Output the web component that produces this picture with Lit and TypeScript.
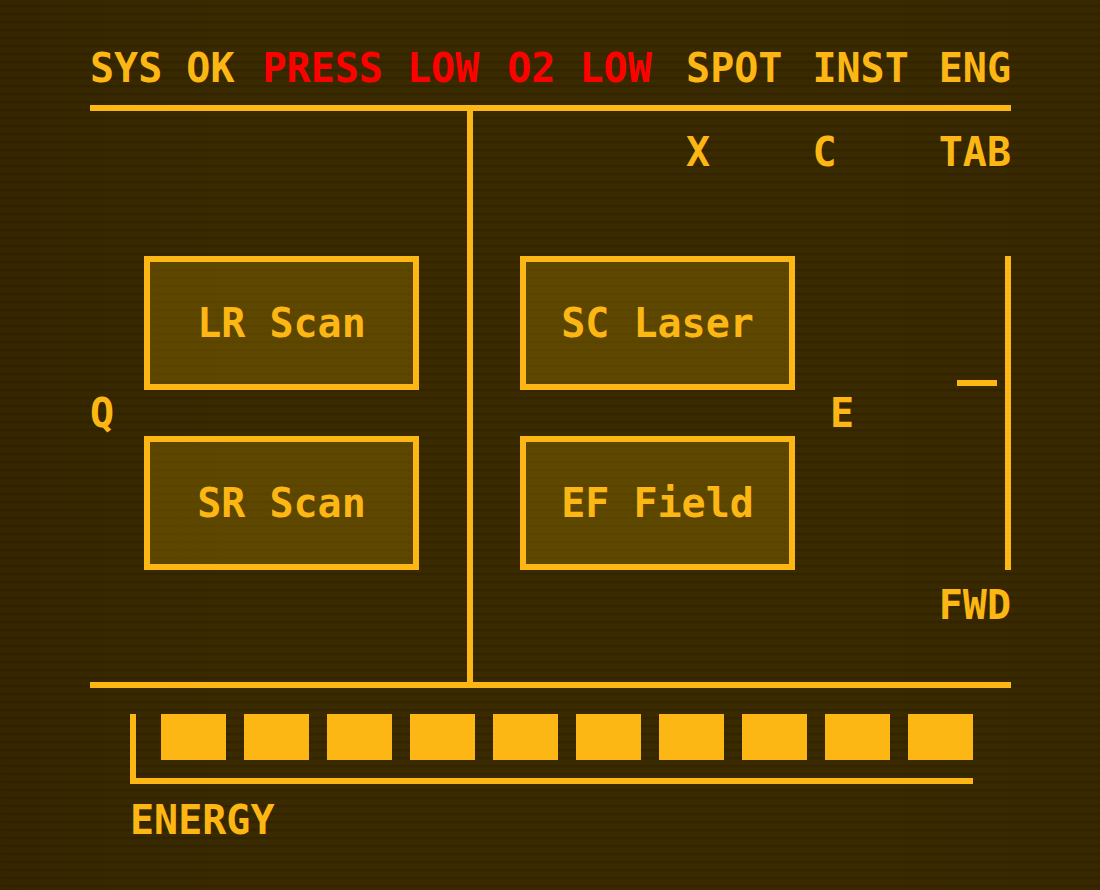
import { LitElement, html, css } from "lit";
import { customElement, property, state } from "lit/decorators.js";

@customElement("system-button")
class SystemButton extends LitElement {
  @property() label = "";

  static styles = css`
    :host { display: block; }
    .system {
      box-sizing: border-box;
      width: 100%;
      height: 134px;
      padding: 0;
      border: 6px solid #fdb714;
      border-radius: 0;
      background: rgba(180, 144, 0, 0.3);
      color: inherit;
      font: inherit;
      white-space: nowrap;
      cursor: pointer;
    }
  `;

  render() {
    return html`<button class="system" type="button">${this.label}</button>`;
  }
}

@customElement("energy-gauge")
class EnergyGauge extends LitElement {
  @property({ type: Number }) cells = 10;

  static styles = css`
    :host { display: block; }
    .cells {
      display: grid;
      grid-auto-flow: column;
      grid-auto-columns: 1fr;
      gap: 18px;
      padding: 0 0 18px 25px;
      border: solid #fdb714;
      border-width: 0 0 6px 6px;
    }
    .cell { height: 46px; background: #fdb714; }
    .label { margin-top: 12px; }
  `;

  render() {
    return html`
      <div class="cells" role="img" aria-labelledby="energy">
        ${Array.from({ length: this.cells }, () => html`<div class="cell"></div>`)}
      </div>
      <div class="label" id="energy">ENERGY</div>
    `;
  }
}

@customElement("app-root")
class AppRoot extends LitElement {
  @state() private left = ["LR Scan", "SR Scan"];
  @state() private right = ["SC Laser", "EF Field"];

  static styles = css`
    :host {
      display: block;
      box-sizing: border-box;
      min-height: 100vh;
      padding: 44px 89px 40px 90px;
      color: #fdb714;
      font: bold 40px/48px "DejaVu Sans Mono", monospace;
      background:
        repeating-linear-gradient(transparent 0 4px, rgba(20, 10, 0, 0.22) 6px, transparent 8px),
        linear-gradient(90deg, #362600, #3a2a00 20%, #3a2a00 80%, #382800);
    }
    .status {
      display: flex;
      justify-content: space-between;
      padding-bottom: 13px;
      border-bottom: 6px solid #fdb714;
      white-space: nowrap;
    }
    .alerts { display: flex; gap: 28px; }
    .low { color: #ff0000; }
    .tabs {
      display: grid;
      grid-template-columns: 4ch 4ch 3ch;
      justify-content: end;
      gap: 30px;
    }
    .deck {
      display: grid;
      grid-template-columns: 383fr 538fr;
      border-bottom: 6px solid #fdb714;
    }
    .port {
      display: grid;
      grid-template-columns: 54px 1fr;
      align-items: center;
      padding: 145px 48px 112px 0;
      border-right: 6px solid #fdb714;
    }
    .starboard { padding: 17px 0 53px 47px; }
    .controls {
      display: grid;
      grid-template-columns: 275fr 216fr;
      padding-top: 80px;
    }
    .systems { display: grid; gap: 46px; }
    .flight {
      display: flex;
      justify-content: space-between;
      align-items: center;
      padding-left: 35px;
    }
    .throttle {
      display: flex;
      align-self: stretch;
      align-items: flex-start;
      gap: 8px;
    }
    .track { align-self: stretch; width: 6px; background: #fdb714; }
    .tick { width: 40px; height: 6px; margin-top: 124px; background: #fdb714; }
    .direction { margin-top: 11px; text-align: right; }
    .energy { margin: 26px 38px 0 40px; }
  `;

  render() {
    return html`
      <header class="status">
        <div class="alerts">
          <span>SYS OK</span>
          <span class="low">PRESS LOW</span>
          <span class="low">O2 LOW</span>
        </div>
        <div class="tabs"><span>SPOT</span><span>INST</span><span>ENG</span></div>
      </header>
      <main class="deck">
        <section class="port">
          <span>Q</span>
          <div class="systems">
            ${this.left.map((name) => html`<system-button label=${name}></system-button>`)}
          </div>
        </section>
        <section class="starboard">
          <div class="tabs"><span>X</span><span>C</span><span>TAB</span></div>
          <div class="controls">
            <div class="systems">
              ${this.right.map((name) => html`<system-button label=${name}></system-button>`)}
            </div>
            <div class="flight">
              <span>E</span>
              <div class="throttle">
                <div class="tick"></div>
                <div class="track"></div>
              </div>
            </div>
          </div>
          <div class="direction">FWD</div>
        </section>
      </main>
      <energy-gauge class="energy"></energy-gauge>
    `;
  }
}
